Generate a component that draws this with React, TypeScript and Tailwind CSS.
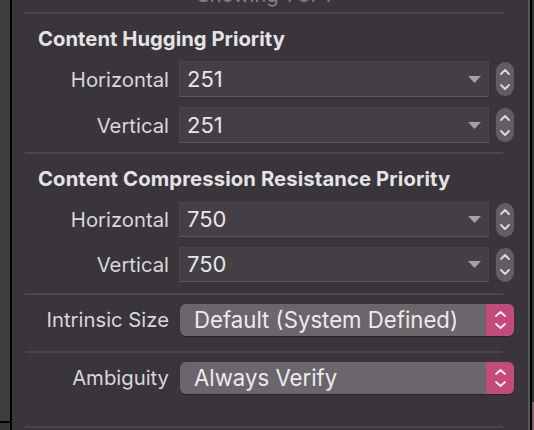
const font = { fontFamily: "Inter, 'Noto Sans', sans-serif" };

function Separator({ className = "" }: { className?: string }) {
  return <div className={`ml-[13px] mr-[25px] h-[2px] bg-[#4a464b] ${className}`} />;
}

function Stepper() {
  return (
    <div className="flex h-[34px] w-[18px] flex-col items-center justify-center gap-[9px] rounded-full bg-[#615d62]">
      <svg width="10" height="6" viewBox="0 0 10 6" fill="none">
        <path d="M1 5L5 1L9 5" stroke="#dedcdf" strokeWidth="1.8" strokeLinecap="round" strokeLinejoin="round" />
      </svg>
      <svg width="10" height="6" viewBox="0 0 10 6" fill="none">
        <path d="M1 1L5 5L9 1" stroke="#dedcdf" strokeWidth="1.8" strokeLinecap="round" strokeLinejoin="round" />
      </svg>
    </div>
  );
}

function ComboRow({ label, value, height, className = "" }: { label: string; value: string; height: string; className?: string }) {
  return (
    <div className={`flex items-center ${className}`}>
      <span className="w-[157px] pt-[2px] text-right text-[20.3px] text-[#d8d7d9]">{label}</span>
      <div
        className={`ml-[10px] flex ${height} w-[310px] items-center justify-between border border-[#48444a] border-b-[#5c585d] bg-[#433f44] pl-[7px] pr-[7px]`}
      >
        <span className="text-[22px] text-[#e8e7e8]">{value}</span>
        <svg width="13" height="7" viewBox="0 0 13 7">
          <polygon points="0,0 13,0 6.5,7" fill="#a4a2a5" />
        </svg>
      </div>
      <div className="ml-[7px]">
        <Stepper />
      </div>
    </div>
  );
}

function PopupRow({ label, value, className = "" }: { label: string; value: string; className?: string }) {
  return (
    <div className={`flex items-center ${className}`}>
      <span className="w-[157px] text-right text-[20.3px] text-[#d8d7d9]">{label}</span>
      <div className="ml-[11px] flex h-[32px] w-[334px] overflow-hidden rounded-[6px] bg-[#6a666b] shadow-[0_1px_1px_rgba(0,0,0,0.35)]">
        <span className="flex-1 pl-[14px] text-[22.2px] leading-[32px] text-[#ecebec]">{value}</span>
        <div className="flex w-[28px] flex-col items-center justify-center gap-[6px] bg-[#c44a7b]">
          <svg width="11" height="6" viewBox="0 0 11 6" fill="none">
            <path d="M1 5L5.5 1L10 5" stroke="#f5eef1" strokeWidth="1.8" strokeLinecap="round" strokeLinejoin="round" />
          </svg>
          <svg width="11" height="6" viewBox="0 0 11 6" fill="none">
            <path d="M1 1L5.5 5L10 1" stroke="#f5eef1" strokeWidth="1.8" strokeLinecap="round" strokeLinejoin="round" />
          </svg>
        </div>
      </div>
    </div>
  );
}

export default function App() {
  return (
    <div className="flex h-[430px] w-[534px] overflow-hidden bg-[#39353a]" style={font}>
      <div className="flex w-[10px] flex-col bg-[#3d3d3d]">
        <div className="h-[421px]" />
        <div className="h-[2px] bg-black" />
        <div className="flex-1 bg-[#363636]" />
      </div>
      <div className="w-[2px] bg-black" />

      <div className="flex-1 bg-[#39353a]">
        <div className="h-[12px] overflow-hidden pr-[12px]">
          <p className="mt-[-17px] text-center text-[20px] leading-6 text-[#858287]">Showing 1 of 1</p>
        </div>
        <Separator />

        <h2 className="mt-[13px] pl-[26px] text-[20.3px] font-bold leading-6 text-[#e4e3e5]">Content Hugging Priority</h2>
        <ComboRow label="Horizontal" value="251" height="h-[36px]" className="mt-[10px]" />
        <ComboRow label="Vertical" value="251" height="h-[36px]" className="mt-[10px]" />
        <Separator className="mt-[9px]" />

        <h2 className="mt-[13px] pl-[26px] text-[20.3px] font-bold leading-6 tracking-[0.1px] text-[#e4e3e5]">
          Content Compression Resistance Priority
        </h2>
        <ComboRow label="Horizontal" value="750" height="h-[35px]" className="mt-[11px]" />
        <ComboRow label="Vertical" value="750" height="h-[35px]" className="mt-[10px]" />
        <Separator className="mt-[11px]" />

        <PopupRow label="Intrinsic Size" value="Default (System Defined)" className="mt-[9px]" />
        <Separator className="mt-[15px]" />
        <PopupRow label="Ambiguity" value="Always Verify" className="mt-[9px]" />
        <Separator className="mt-[32px]" />
      </div>

      <div className="w-[2px] bg-[#5a575b]" />
      <div className="w-[2px] bg-black" />
      <div className="flex w-[2px] flex-col bg-[#2e3535]">
        <div className="h-[402px]" />
        <div className="flex-1 bg-[#8a5a6d]" />
      </div>
    </div>
  );
}
